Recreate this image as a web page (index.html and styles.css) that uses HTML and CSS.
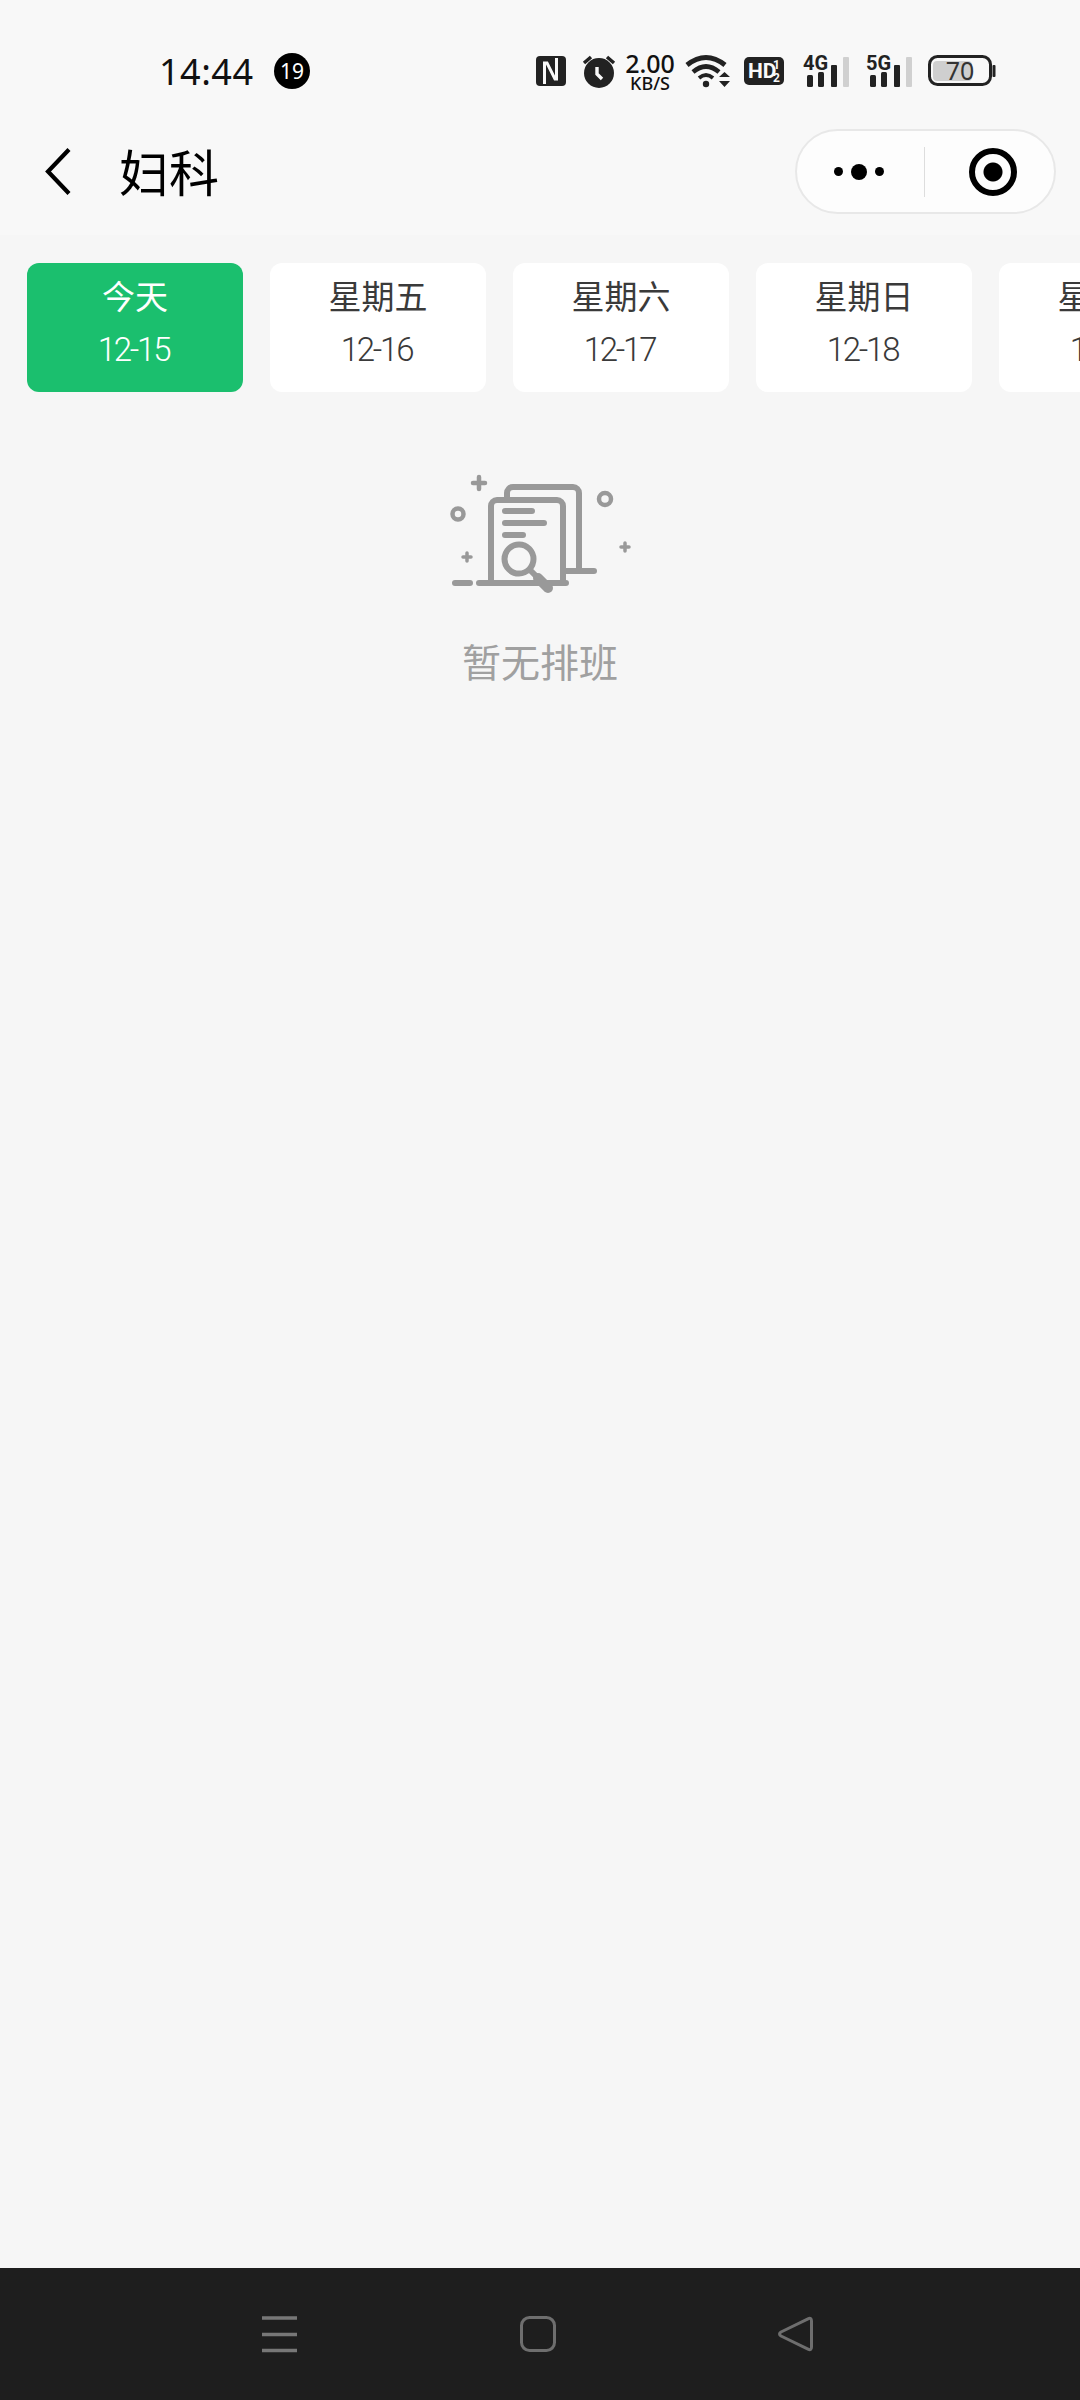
FILE: index.html
```html
<!DOCTYPE html>
<html lang="zh">
<head>
    <meta charset="UTF-8">
    <meta name="viewport" content="width=device-width, initial-scale=1.0">
    <title>妇科</title>
    <link rel="stylesheet" href="styles.css">
</head>
<body>
    <div class="page">
        <header class="top-area">
            <div class="status-bar">
                <span class="time">14:44</span>
                <span class="notice-badge">19</span>
                <div class="status-icons">
                    <svg class="icon-nfc" width="30" height="30" viewBox="0 0 30 30">
                        <rect width="30" height="30" rx="4" fill="#222"/>
                        <path d="M8.500 28V7h2.500l8 16h1.500V2" fill="none" stroke="#f9f9f9" stroke-width="3"/>
                    </svg>
                    <svg class="icon-alarm" width="32" height="33" viewBox="0 0 32 33">
                        <circle cx="16" cy="18" r="15" fill="#222"/>
                        <path d="M1 8 8 2M31 8 24 2" stroke="#222" stroke-width="3.500" fill="none"/>
                        <path d="M14 12v7l5 5" stroke="#f9f9f9" stroke-width="3.400" fill="none"/>
                    </svg>
                    <div class="net-speed">
                        <span class="speed-value">2.00</span>
                        <span class="speed-unit">KB/S</span>
                    </div>
                    <svg class="icon-wifi" width="47" height="33" viewBox="0 0 47 33">
                        <path d="M2 10Q21-5 40 10" stroke="#222" stroke-width="5" fill="none"/>
                        <path d="M8 17Q21 6 34 17" stroke="#222" stroke-width="4.600" fill="none"/>
                        <path d="M14 23Q21 17 28 23" stroke="#222" stroke-width="3.800" fill="none"/>
                        <circle cx="21" cy="29" r="3.200" fill="#222"/>
                        <path d="M34 22h11l-5.500-5zM34 26h11l-5.500 6z" fill="#222"/>
                    </svg>
                    <svg class="icon-hd" width="40" height="28" viewBox="0 0 40 28">
                        <rect width="40" height="28" rx="5" fill="#222"/>
                        <text x="4" y="21" class="hd-text">HD</text>
                        <text x="29" y="12" class="hd-frac">1</text>
                        <text x="29" y="25" class="hd-frac">2</text>
                    </svg>
                    <svg class="icon-signal" width="46" height="33" viewBox="0 0 46 33">
                        <text x="0" y="15" class="signal-text">4G</text>
                        <rect x="4" y="20" width="6" height="12" rx="1.500" fill="#222"/>
                        <rect x="15" y="17" width="6" height="15" rx="1.500" fill="#222"/>
                        <rect x="28" y="10" width="6" height="22" rx="1" fill="#222"/>
                        <rect x="40" y="2" width="6" height="30" rx="1" fill="#d0d0d0"/>
                    </svg>
                    <svg class="icon-signal" width="46" height="33" viewBox="0 0 46 33">
                        <text x="0" y="15" class="signal-text">5G</text>
                        <rect x="4" y="20" width="6" height="12" rx="1.500" fill="#222"/>
                        <rect x="15" y="17" width="6" height="15" rx="1.500" fill="#222"/>
                        <rect x="28" y="10" width="6" height="22" rx="1" fill="#222"/>
                        <rect x="40" y="2" width="6" height="30" rx="1" fill="#d0d0d0"/>
                    </svg>
                    <svg class="icon-battery" width="68" height="32" viewBox="0 0 68 32">
                        <rect x="1.500" y="1.500" width="61" height="28" rx="8" fill="none" stroke="#222" stroke-width="3"/>
                        <rect x="5" y="6" width="39" height="20" rx="4" fill="#cfcfcf"/>
                        <rect x="64.500" y="10" width="3" height="12" rx="1" fill="#222"/>
                        <text x="32" y="24.500" class="battery-text">70</text>
                    </svg>
                </div>
            </div>
            <nav class="title-bar">
                <svg class="back-icon" width="28" height="52" viewBox="0 0 28 52">
                    <path d="M25 3.500 4 25.500l21 22" fill="none" stroke="#000" stroke-width="4.200"/>
                </svg>
                <h1 class="page-title">妇科</h1>
                <div class="capsule">
                    <div class="capsule-btn capsule-more">
                        <span class="dot"></span>
                        <span class="dot dot-big"></span>
                        <span class="dot"></span>
                    </div>
                    <div class="capsule-divider"></div>
                    <div class="capsule-btn capsule-close">
                        <span class="target"></span>
                    </div>
                </div>
            </nav>
        </header>

        <div class="date-tabs">
            <div class="date-tab active"><span class="tab-day">今天</span><span class="tab-date">12-15</span></div>
            <div class="date-tab"><span class="tab-day">星期五</span><span class="tab-date">12-16</span></div>
            <div class="date-tab"><span class="tab-day">星期六</span><span class="tab-date">12-17</span></div>
            <div class="date-tab"><span class="tab-day">星期日</span><span class="tab-date">12-18</span></div>
            <div class="date-tab"><span class="tab-day">星期一</span><span class="tab-date">12-19</span></div>
        </div>

        <main class="empty-state">
            <svg width="220" height="140" viewBox="0 0 220 140" fill="none" stroke="#999" stroke-linecap="round" stroke-linejoin="round">
                <!-- back sheet -->
                <path d="M77 37v-4a6 6 0 0 1 6-6h60a6 6 0 0 1 6 6v78" stroke-width="6"/>
                <path d="M136 111h28" stroke-width="6"/>
                <!-- front sheet -->
                <path d="M61 123V46a6 6 0 0 1 6-6h60a6 6 0 0 1 6 6v77" stroke-width="6"/>
                <path d="M49 123h87M25 123h15" stroke-width="6"/>
                <path d="M75 51h27M75 63h39M75 75h18" stroke-width="6"/>
                <!-- magnifier -->
                <circle cx="89" cy="99" r="14.500" fill="#f6f6f6" stroke-width="6"/>
                <path d="M102 112l6 6" stroke-width="6"/>
                <path d="M108 118l10 10" stroke-width="10"/>
                <!-- sparkles -->
                <circle cx="28" cy="54" r="5.500" stroke-width="4.500"/>
                <circle cx="175" cy="39" r="6" stroke-width="4.500"/>
                <path d="M49 17v12M43 23h12" stroke-width="4.500"/>
                <path d="M37 93v8M33 97h8M195 83v8M191 87h8" stroke-width="3.500"/>
            </svg>
            <p class="empty-text">暂无排班</p>
        </main>

        <footer class="system-nav">
            <svg width="36" height="36" viewBox="0 0 36 36">
                <path d="M0 2h35M0 18.500h35M0 34.500h35" stroke="#777" stroke-width="3.400"/>
            </svg>
            <svg width="36" height="36" viewBox="0 0 36 36">
                <rect x="1.500" y="1.500" width="33" height="33" rx="8" fill="none" stroke="#6e6e6e" stroke-width="3"/>
            </svg>
            <svg width="36" height="36" viewBox="0 0 36 36">
                <path d="M30 2.800Q33.500 1 33.500 5V31Q33.500 35 30 33.200L3 20Q0 18 3 16Z" fill="none" stroke="#6e6e6e" stroke-width="3" stroke-linejoin="round"/>
            </svg>
        </footer>
    </div>
</body>
</html>
```

FILE: styles.css
```css
body {
    margin: 0;
    background-color: #f6f6f6;
    font-family: "Noto Sans CJK SC", "Noto Sans", sans-serif;
}

svg {
    overflow: visible;
}

.page {
    height: 2400px;
    display: flex;
    flex-direction: column;
    overflow: hidden;
}

/* status bar + title */
.top-area {
    height: 235px;
    background-color: #f8f8f8;
}

.status-bar {
    height: 46px;
    padding: 48px 0 0 159px;
    display: flex;
    align-items: center;
    color: #111;
}

.time {
    font-family: "Noto Sans", sans-serif;
    font-size: 36px;
    letter-spacing: 0.5px;
    width: 115px;
}

.notice-badge {
    width: 36px;
    height: 36px;
    border-radius: 50%;
    background-color: #000;
    color: #fff;
    font-family: "Noto Sans", sans-serif;
    font-size: 21px;
    line-height: 36px;
    text-align: center;
}

.status-icons {
    margin-left: 226px;
    display: flex;
    align-items: center;
}

.icon-alarm { margin-left: 17px; }
.icon-wifi { margin-left: 10px; }
.icon-hd { margin-left: 12px; }
.icon-signal { margin-left: 19px; }
.icon-signal + .icon-signal { margin-left: 17px; }
.icon-battery { margin-left: 16px; }

.net-speed {
    margin-left: 10px;
    width: 50px;
    display: flex;
    flex-direction: column;
    align-items: center;
    font-family: "Noto Sans", sans-serif;
    font-weight: 500;
    color: #111;
}

.speed-value {
    font-size: 25px;
    line-height: 24px;
}

.speed-unit {
    font-size: 18px;
    line-height: 16px;
}

.hd-text {
    font-family: Roboto, sans-serif;
    font-weight: 700;
    font-size: 21px;
    fill: #f9f9f9;
}

.hd-frac {
    font-family: Roboto, sans-serif;
    font-weight: 700;
    font-size: 12px;
    fill: #f9f9f9;
}

.signal-text {
    font-family: Roboto, sans-serif;
    font-weight: 700;
    font-size: 20px;
    fill: #222;
}

.battery-text {
    font-family: "Noto Sans", sans-serif;
    font-size: 25px;
    text-anchor: middle;
    fill: #333;
}

.title-bar {
    padding: 35px 24px 0 44px;
    display: flex;
    align-items: center;
}

.back-icon {
    margin-right: 47px;
}

.page-title {
    margin: 0 0 3px;
    flex: 1;
    font-size: 50px;
    font-weight: 400;
    color: #000;
}

.capsule {
    width: 261px;
    height: 85px;
    box-sizing: border-box;
    border: 2px solid #e8e8e8;
    border-radius: 43px;
    background-color: #fdfdfd;
    display: flex;
    align-items: center;
}

.capsule-btn {
    flex: 1;
    display: flex;
    align-items: center;
    justify-content: center;
    gap: 8px;
}

.capsule-more {
    padding-right: 4px;
}

.capsule-close {
    padding-left: 6px;
}

.capsule-divider {
    width: 1px;
    height: 50px;
    background-color: #ddd;
}

.dot {
    width: 9px;
    height: 9px;
    border-radius: 50%;
    background-color: #000;
}

.dot-big {
    width: 16px;
    height: 16px;
}

.target {
    width: 36px;
    height: 36px;
    border: 6px solid #000;
    border-radius: 50%;
    background: radial-gradient(circle, #000 0, #000 9px, #fdfdfd 10px);
}

/* date strip */
.date-tabs {
    margin-top: 28px;
    padding-left: 27px;
    display: flex;
    gap: 27px;
    overflow: hidden;
}

.date-tab {
    flex: none;
    width: 216px;
    height: 129px;
    border-radius: 12px;
    background-color: #fff;
    color: #3a3a3a;
    display: flex;
    flex-direction: column;
    align-items: center;
}

.date-tab.active {
    background-color: #1bbf6e;
    color: #fff;
}

.tab-day {
    margin-top: 9px;
    font-size: 33px;
    line-height: 46px;
    font-weight: 400;
}

.tab-date {
    margin-top: 10px;
    padding-right: 3px;
    font-family: Roboto, sans-serif;
    font-size: 33px;
    font-weight: 300;
    line-height: 44px;
    letter-spacing: -2.200px;
}

/* empty state */
.empty-state {
    flex: 1;
    margin-top: 68px;
    display: flex;
    flex-direction: column;
    align-items: center;
}

.empty-text {
    margin: 32px 0 0;
    font-size: 39px;
    line-height: 56px;
    font-weight: 400;
    color: #a0a0a0;
}

/* android nav bar */
.system-nav {
    height: 132px;
    flex: none;
    background-color: #1e1e1e;
    padding-left: 262px;
    display: flex;
    align-items: center;
    gap: 222px;
}
```
